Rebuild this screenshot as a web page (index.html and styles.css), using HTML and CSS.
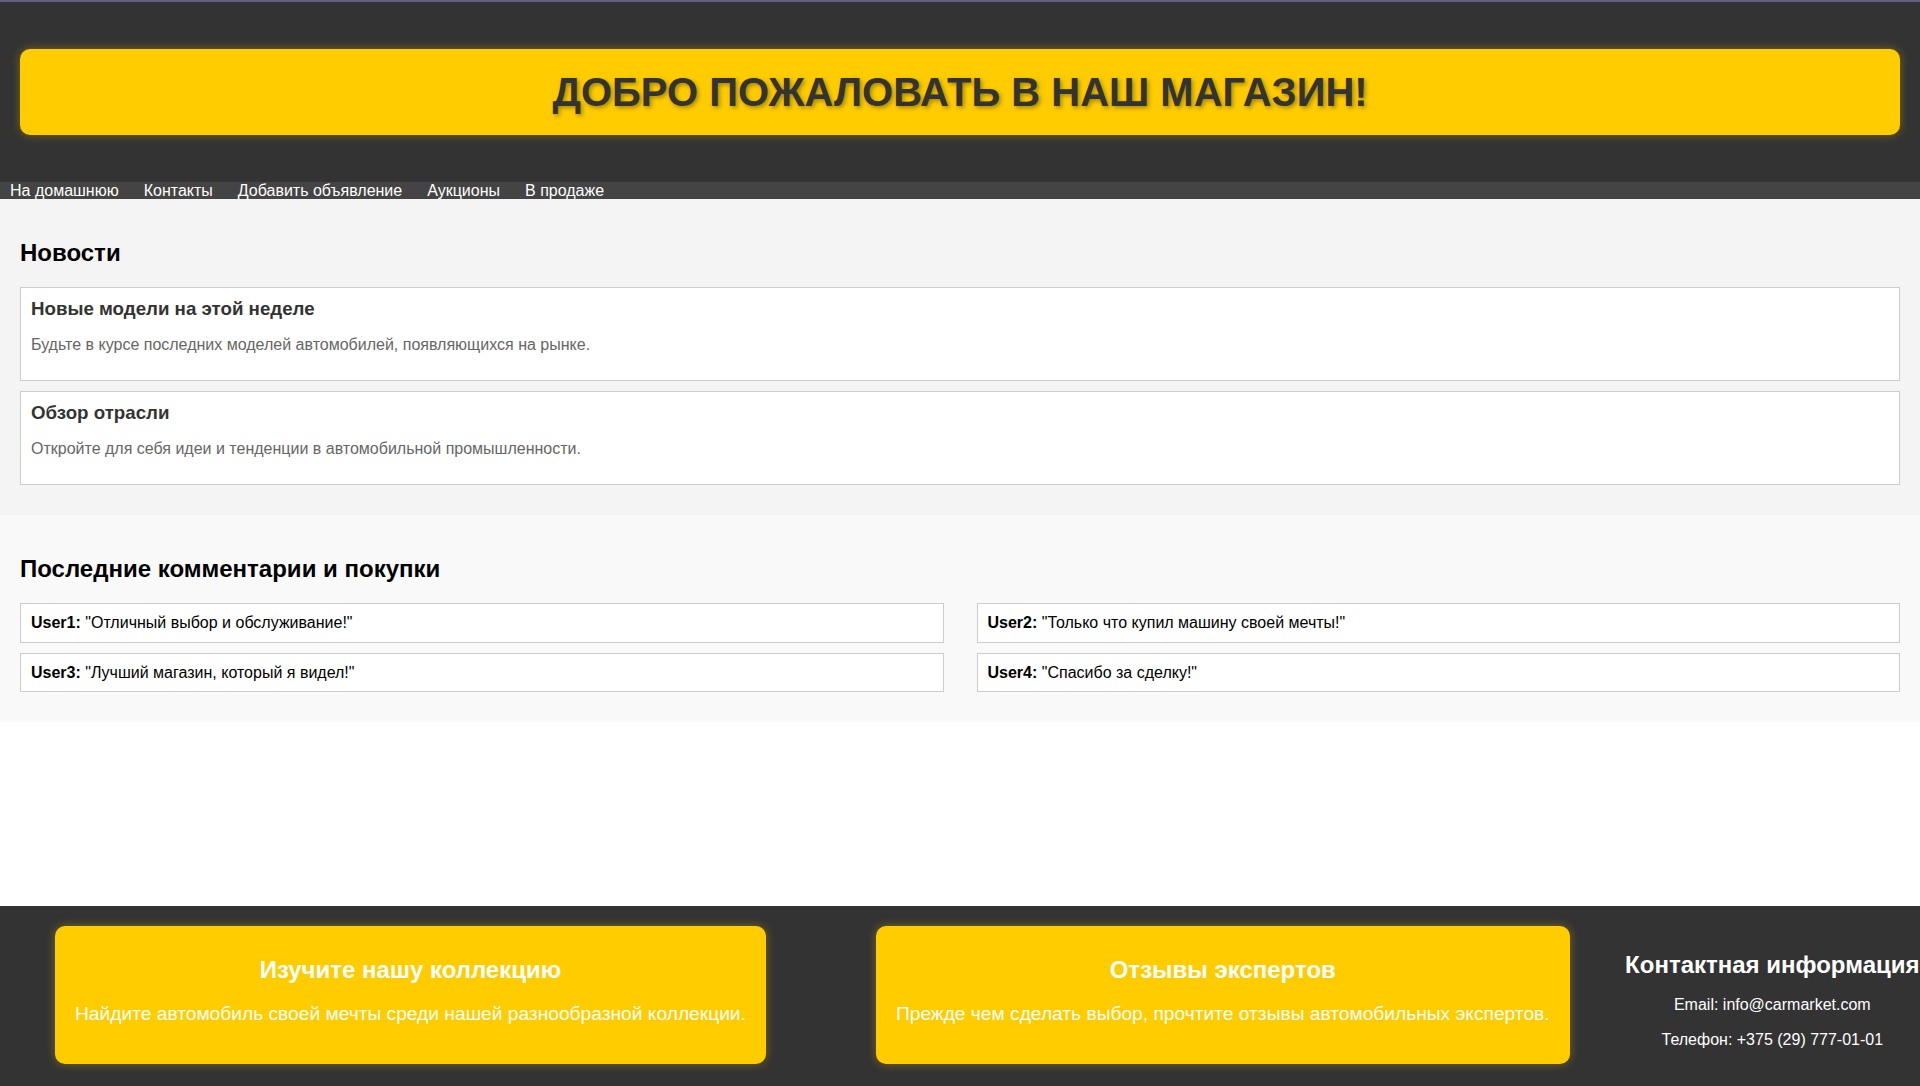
FILE: index.html
```html
<!DOCTYPE html>
<html lang="ru">
<head>
<meta charset="utf-8">
<title>Магазин</title>
<link rel="stylesheet" href="styles.css">
</head>
<body>
<header class="site-header">
  <div class="banner">
    <h1 class="banner-title">ДОБРО ПОЖАЛОВАТЬ В НАШ МАГАЗИН!</h1>
  </div>
</header>
<nav class="nav">
  <ul class="nav-list">
    <li><a href="#">На домашнюю</a></li>
    <li><a href="#">Контакты</a></li>
    <li><a href="#">Добавить объявление</a></li>
    <li><a href="#">Аукционы</a></li>
    <li><a href="#">В продаже</a></li>
  </ul>
</nav>
<main class="main">
  <section class="news">
    <h2 class="section-title">Новости</h2>
    <article class="news-card">
      <h3 class="news-title">Новые модели на этой неделе</h3>
      <p class="news-text">Будьте в курсе последних моделей автомобилей, появляющихся на рынке.</p>
    </article>
    <article class="news-card">
      <h3 class="news-title">Обзор отрасли</h3>
      <p class="news-text">Откройте для себя идеи и тенденции в автомобильной промышленности.</p>
    </article>
  </section>
  <section class="comments">
    <h2 class="section-title">Последние комментарии и покупки</h2>
    <div class="comment-grid">
      <div class="comment"><strong>User1:</strong> "Отличный выбор и обслуживание!"</div>
      <div class="comment"><strong>User2:</strong> "Только что купил машину своей мечты!"</div>
      <div class="comment"><strong>User3:</strong> "Лучший магазин, который я видел!"</div>
      <div class="comment"><strong>User4:</strong> "Спасибо за сделку!"</div>
    </div>
  </section>
</main>
<footer class="footer">
  <div class="promo promo-first">
    <h2 class="promo-title">Изучите нашу коллекцию</h2>
    <p class="promo-text">Найдите автомобиль своей мечты среди нашей разнообразной коллекции.</p>
  </div>
  <div class="promo promo-second">
    <h2 class="promo-title">Отзывы экспертов</h2>
    <p class="promo-text">Прежде чем сделать выбор, прочтите отзывы автомобильных экспертов.</p>
  </div>
  <div class="contact">
    <h2 class="contact-title">Контактная информация</h2>
    <p class="contact-line">Email: info@carmarket.com</p>
    <p class="contact-line">Телефон: +375 (29) 777-01-01</p>
  </div>
</footer>
</body>
</html>
```
FILE: styles.css
```css
* { box-sizing: border-box; }

html, body {
  margin: 0;
  padding: 0;
}

body {
  font-family: "Liberation Sans", Arial, sans-serif;
  font-size: 16px;
  background: #ffffff;
  color: #000;
  min-height: 100vh;
  display: flex;
  flex-direction: column;
  overflow-x: hidden;
}

.site-header {
  background: #333333;
  border-top: 2px solid #5d6083;
  padding: 47px 20px 47px;
}

.banner {
  background: #ffcc00;
  border-radius: 10px;
  padding: 20px;
  box-shadow: 0 0 10px rgba(255, 204, 0, 0.35);
  text-align: center;
}

.banner-title {
  margin: 0;
  font-size: 40px;
  font-weight: bold;
  color: #333333;
  line-height: 46px;
  text-shadow: 2px 2px 4px rgba(0, 0, 0, 0.35);
}

.nav {
  background: #444444;
}

.nav-list {
  list-style: none;
  margin: 0;
  padding: 0 0 0 10px;
  display: flex;
  gap: 25px;
}

.nav-list a {
  color: #ffffff;
  text-decoration: none;
  line-height: 17px;
  display: block;
}

.main {
  flex: 1;
}

.news {
  background: #f4f4f4;
  padding: 20px;
}

.comments {
  background: #f9f9f9;
  padding: 20px;
}

.section-title {
  font-size: 24px;
  margin: 20px 0;
  color: #000;
}

.news-card {
  background: #fff;
  border: 1px solid #cccccc;
  padding: 10px;
  margin-bottom: 10px;
}

.news-title {
  margin: 0;
  font-size: 18.72px;
  color: #333333;
}

.news-text {
  margin: 16px 0;
  font-size: 16px;
  color: #666666;
}

.comment-grid {
  display: grid;
  grid-template-columns: 1fr 1fr;
  column-gap: 33px;
}

.comment {
  background: #fff;
  border: 1px solid #cccccc;
  padding: 10px;
  margin-bottom: 10px;
  font-size: 16px;
  line-height: 17.5px;
}

.footer {
  background: #333333;
  color: #ffffff;
  display: flex;
  align-items: flex-start;
  padding: 20px 0 22px 55px;
  overflow: hidden;
}

.promo {
  background: #ffcc00;
  border-radius: 10px;
  padding: 20px;
  text-align: center;
  box-shadow: 0 0 10px rgba(255, 204, 0, 0.35);
  flex: none;
}

.promo-first { margin-right: 110px; }
.promo-second { margin-right: 55px; }

.promo-title {
  margin: 10px 0 0;
  font-size: 24px;
  color: #fff;
}

.promo-text {
  margin: 19.2px 0;
  font-size: 19.2px;
  color: #fff;
}

.contact {
  flex: 1;
  min-width: 0;
  text-align: center;
  margin-top: 25px;
  white-space: nowrap;
}

.contact-title {
  margin: 0;
  font-size: 24px;
}

.contact-line {
  margin: 17px 0 0;
  font-size: 16px;
}
```
